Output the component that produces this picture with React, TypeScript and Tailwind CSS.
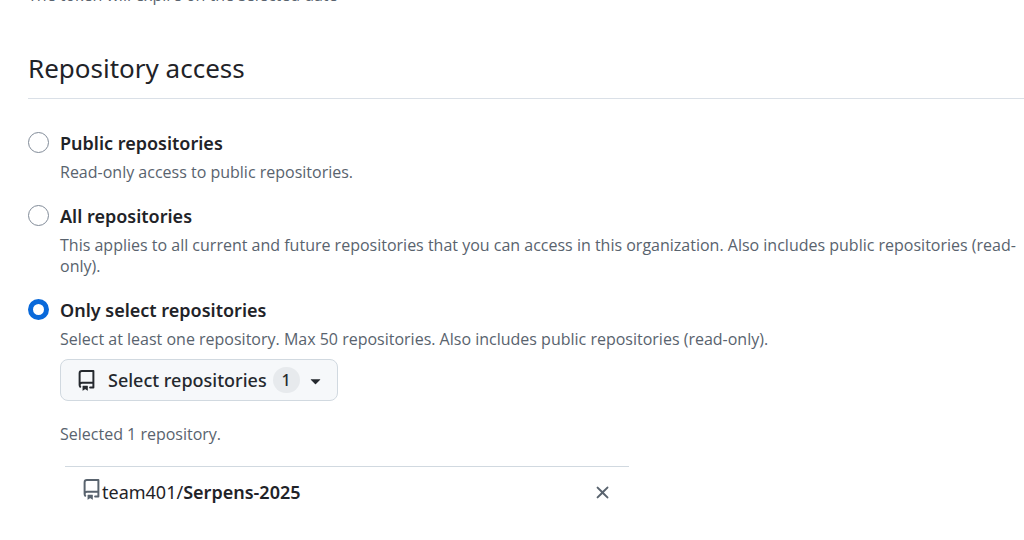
import { useState } from "react";
import type { ReactNode } from "react";

function RepoIcon({ className }: { className: string }) {
  return (
    <svg viewBox="0 0 16 16" fill="currentColor" aria-hidden="true" className={className}>
      <path d="M2 2.5A2.5 2.5 0 0 1 4.5 0h8.75a.75.75 0 0 1 .75.75v12.5a.75.75 0 0 1-.75.75h-2.5a.75.75 0 0 1 0-1.5h1.75v-2h-8a1 1 0 0 0-.714 1.7.75.75 0 1 1-1.072 1.05A2.495 2.495 0 0 1 2 11.5Zm10.5-1h-8a1 1 0 0 0-1 1v6.708A2.486 2.486 0 0 1 4.5 9h8ZM5 12.25a.25.25 0 0 1 .25-.25h3.5a.25.25 0 0 1 .25.25v3.25a.25.25 0 0 1-.4.2l-1.45-1.087a.249.249 0 0 0-.3 0L5.4 15.7a.25.25 0 0 1-.4-.2Z" />
    </svg>
  );
}

function TriangleDownIcon({ className }: { className: string }) {
  return (
    <svg viewBox="0 0 16 16" fill="currentColor" aria-hidden="true" className={className}>
      <path d="m4.427 7.427 3.396 3.396a.25.25 0 0 0 .354 0l3.396-3.396A.25.25 0 0 0 11.396 7H4.604a.25.25 0 0 0-.177.427Z" />
    </svg>
  );
}

function CloseIcon({ className }: { className: string }) {
  return (
    <svg viewBox="0 0 16 16" fill="currentColor" aria-hidden="true" className={className}>
      <path d="M3.72 3.72a.75.75 0 0 1 1.06 0L8 6.94l3.22-3.22a.749.749 0 0 1 1.275.326.749.749 0 0 1-.215.734L9.06 8l3.22 3.22a.749.749 0 0 1-.326 1.275.749.749 0 0 1-.734-.215L8 9.06l-3.22 3.22a.751.751 0 0 1-1.042-.018.751.751 0 0 1-.018-1.042L6.94 8 3.72 4.78a.75.75 0 0 1 0-1.06Z" />
    </svg>
  );
}

function Note({ id, className = "", children }: { id?: string; className?: string; children: ReactNode }) {
  return (
    <p
      id={id}
      className={`font-['Open_Sans','Noto_Sans',sans-serif] text-base leading-[21px] text-[#59636e] ${className}`}
    >
      {children}
    </p>
  );
}

interface OptionProps {
  id: string;
  label: string;
  description: string;
  selected: string;
  onSelect: (id: string) => void;
  children?: ReactNode;
}

function AccessOption({ id, label, description, selected, onSelect, children }: OptionProps) {
  return (
    <div className="flex items-start gap-[11px]">
      <input
        type="radio"
        name="access"
        id={id}
        checked={selected === id}
        onChange={() => onSelect(id)}
        aria-describedby={`${id}-note`}
        className="mt-0.5 size-[21px] shrink-0 appearance-none rounded-full border border-[#818b98] bg-white checked:border-[5px] checked:border-[#0969da]"
      />
      <div className="min-w-0 flex-1">
        <label htmlFor={id} className="block text-lg leading-[27px] font-semibold">
          {label}
        </label>
        <Note id={`${id}-note`} className="mt-[5px]">
          {description}
        </Note>
        {children}
      </div>
    </div>
  );
}

export default function App() {
  const [access, setAccess] = useState("select");

  return (
    <main className="bg-white pl-7 font-['Noto_Sans',sans-serif] text-[#1f2328]">
      <div className="flex h-1.5 items-end overflow-hidden">
        <Note>The token will expire on the selected date</Note>
      </div>

      <h2 className="mt-[43px] border-b border-[#dae0e7] pb-[11px] text-[26px] leading-[38px]">
        Repository access
      </h2>

      <div className="mt-[31px] flex flex-col gap-5">
        <AccessOption
          id="public"
          label="Public repositories"
          description="Read-only access to public repositories."
          selected={access}
          onSelect={setAccess}
        />
        <AccessOption
          id="all"
          label="All repositories"
          description="This applies to all current and future repositories that you can access in this organization. Also includes public repositories (read-only)."
          selected={access}
          onSelect={setAccess}
        />
        <AccessOption
          id="select"
          label="Only select repositories"
          description="Select at least one repository. Max 50 repositories. Also includes public repositories (read-only)."
          selected={access}
          onSelect={setAccess}
        >
          <button
            type="button"
            className="mt-[9px] flex h-[42px] items-center rounded-lg border border-[#d1d9e0] bg-[#f6f8fa] pr-[11px] pl-[15px] text-lg font-medium text-[#25292e]"
          >
            <RepoIcon className="mr-[11px] size-[21px]" />
            Select repositories
            <span className="mr-[5px] ml-1.5 flex h-[26px] w-[27px] items-center justify-center rounded-full bg-[#e7eaed] text-base">
              1
            </span>
            <TriangleDownIcon className="size-[21px]" />
          </button>
          <Note className="mt-[23px]">Selected 1 repository.</Note>
          <ul className="mt-[21px] ml-[5px] max-w-[564px]">
            <li className="flex items-center justify-between border-t border-[#d1d9e0] px-4 py-3">
              <div className="flex items-start text-lg leading-[27px]">
                <RepoIcon className="size-[21px] text-[#59636e]" />
                <span>
                  team401/<strong className="font-semibold">Serpens-2025</strong>
                </span>
              </div>
              <button type="button" aria-label="Remove Serpens-2025" className="text-[#59636e]">
                <CloseIcon className="size-[21px]" />
              </button>
            </li>
          </ul>
        </AccessOption>
      </div>
    </main>
  );
}
